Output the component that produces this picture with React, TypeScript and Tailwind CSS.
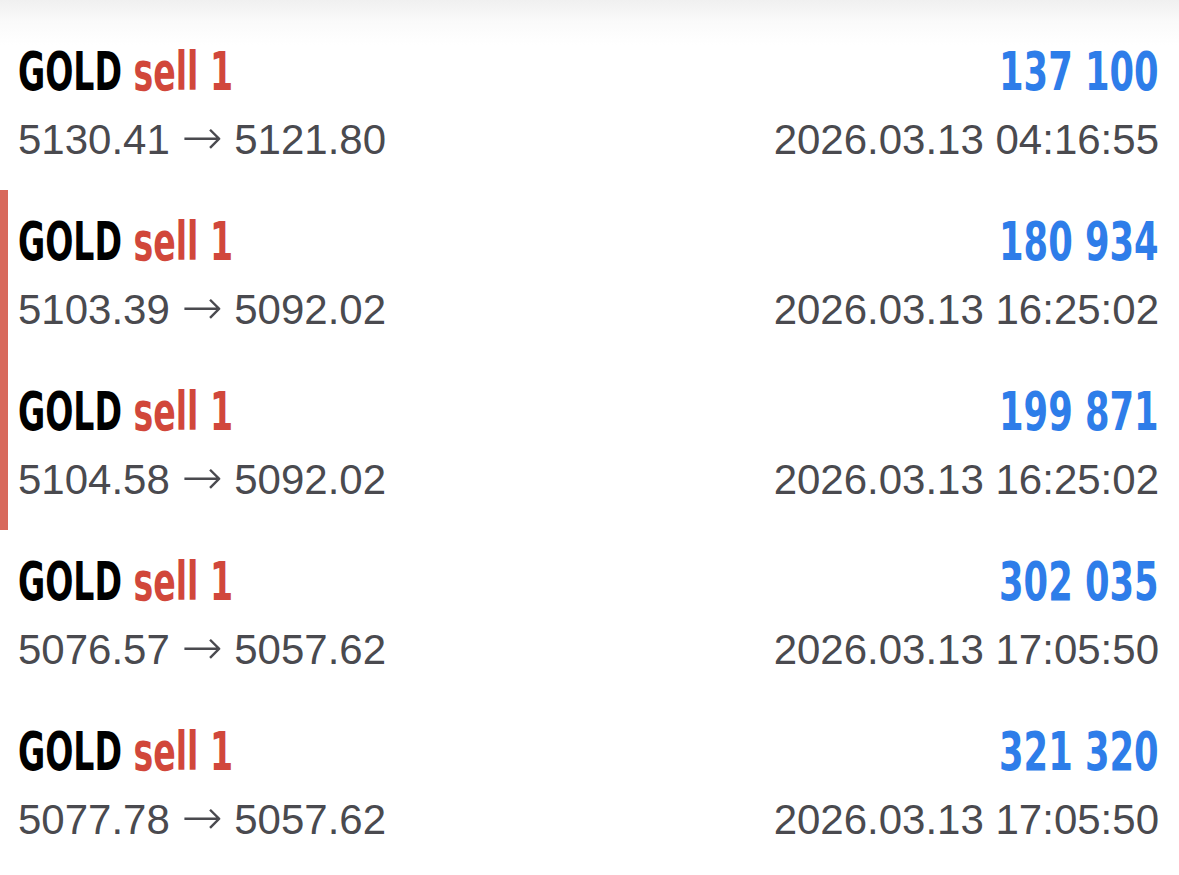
import React from "react";

type Trade = { open: string; close: string; profit: string; time: string; marked?: boolean };

const trades: Trade[] = [
  { open: "5130.41", close: "5121.80", profit: "137 100", time: "2026.03.13 04:16:55" },
  { open: "5103.39", close: "5092.02", profit: "180 934", time: "2026.03.13 16:25:02", marked: true },
  { open: "5104.58", close: "5092.02", profit: "199 871", time: "2026.03.13 16:25:02", marked: true },
  { open: "5076.57", close: "5057.62", profit: "302 035", time: "2026.03.13 17:05:50" },
  { open: "5077.78", close: "5057.62", profit: "321 320", time: "2026.03.13 17:05:50" },
];

const cond = { fontFamily: '"DejaVu Sans Condensed", "DejaVu Sans", sans-serif' };
const reg = { fontFamily: '"Liberation Sans", Arial, sans-serif' };
const arrow = { fontFamily: '"DejaVu Sans", sans-serif' };

function Row({ t }: { t: Trade }) {
  return (
    <div className="relative h-[170px] pl-[18px] pr-[20px] pt-[22px]">
      {t.marked && <div className="absolute left-0 top-0 h-full w-[8px] bg-[#d8695c]" />}
      <div className="flex items-center justify-between text-[53px] font-bold leading-[60px]" style={cond}>
        <div className="inline-block origin-left scale-x-[0.695] whitespace-nowrap">
          <span className="text-black">GOLD</span>{" "}
          <span className="text-[#d1473b]">sell 1</span>
        </div>
        <div className="inline-block origin-right scale-x-[0.74] whitespace-nowrap text-[#2e7de9]">{t.profit}</div>
      </div>
      <div className="mt-[14px] flex items-center justify-between text-[42px] leading-[48px] text-[#4a4a4f]" style={reg}>
        <div className="whitespace-nowrap">
          {t.open}{" "}
          <span className="text-[49px] font-extralight leading-[0]" style={arrow}>→</span>{" "}
          {t.close}
        </div>
        <div className="whitespace-nowrap">{t.time}</div>
      </div>
    </div>
  );
}

export default function App() {
  return (
    <div className="min-h-[875px] w-full overflow-hidden bg-[linear-gradient(to_bottom,#f0f0f0_0px,#fafafa_22px,#ffffff_45px)] pt-[20px]">
      {trades.map((t, i) => (
        <Row key={i} t={t} />
      ))}
    </div>
  );
}
